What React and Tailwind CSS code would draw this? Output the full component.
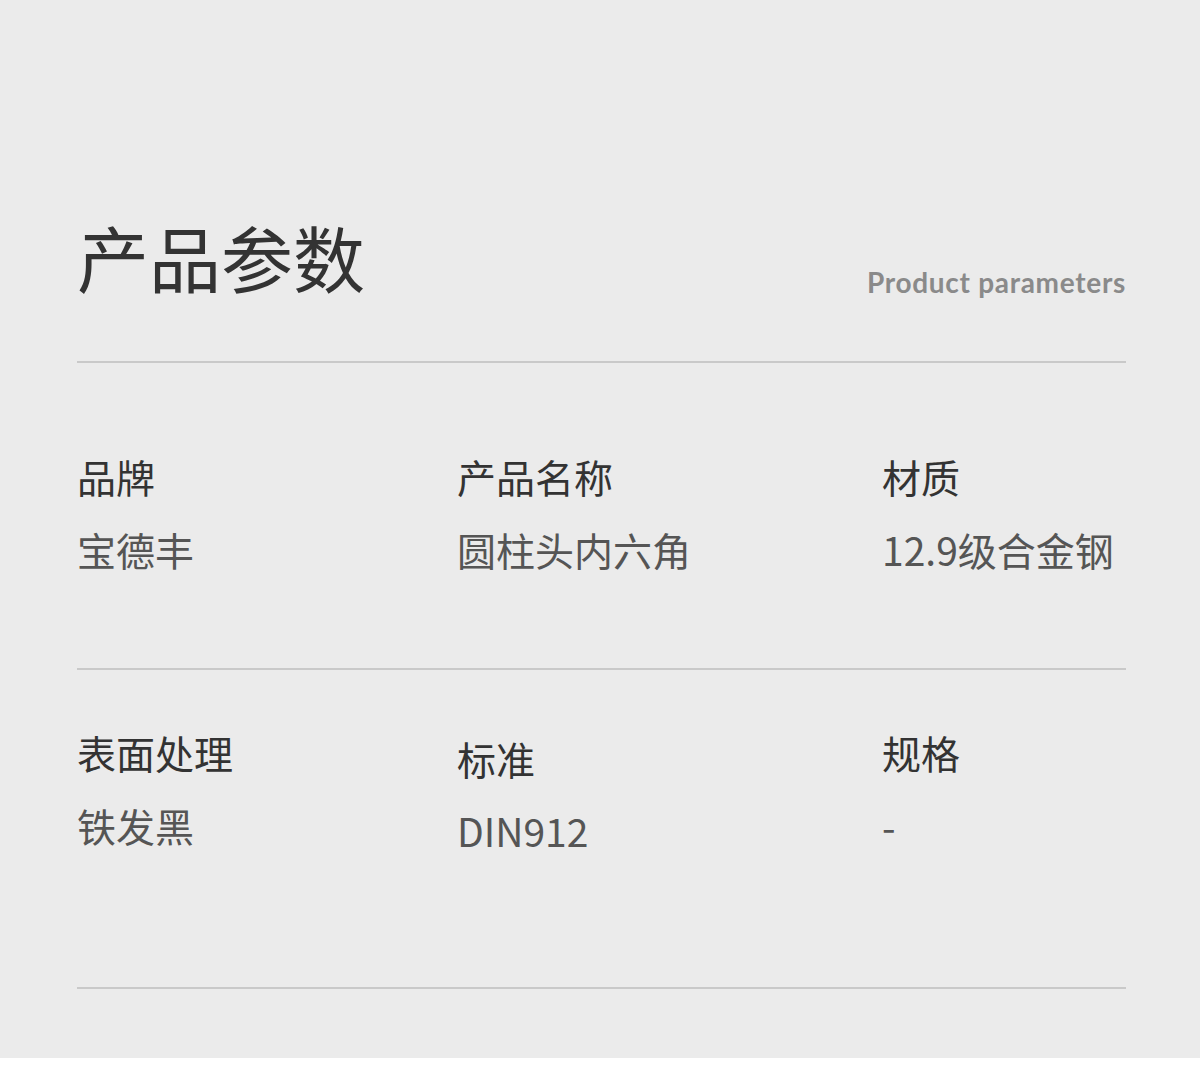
const rows = [
  [
    { label: '品牌', value: '宝德丰' },
    { label: '产品名称', value: '圆柱头内六角' },
    { label: '材质', value: '12.9级合金钢' },
  ],
  [
    { label: '表面处理', value: '铁发黑' },
    { label: '标准', value: 'DIN912', shift: true },
    { label: '规格', value: '-' },
  ],
]

const cjk = { fontFamily: '"Noto Sans CJK SC", "Noto Sans", sans-serif' }

export default function App() {
  return (
    <div className="w-[1200px] bg-white" style={cjk}>
      <div className="h-[1058px] bg-[#ebebeb] px-[77px] pt-[220px]">
        <div className="flex w-[1049px] items-end justify-between">
          <h1 className="text-[72px] leading-none font-normal text-[#333]">产品参数</h1>
          <span
            className="-mb-[4px] text-[28px] leading-none font-bold tracking-[0.7px] text-[#8a8a8a]"
            style={{ fontFamily: 'Lato, sans-serif' }}
          >
            Product parameters
          </span>
        </div>
        <div className="mt-[69px] h-[2px] w-[1049px] bg-[#c9c9c9]" />

        {rows.map((row, i) => (
          <div key={i}>
            <div className={`grid w-[1049px] grid-cols-[380px_425px_1fr] ${i === 0 ? 'pt-[94px] pb-[99px]' : 'pt-[63px] pb-[137px]'}`}>
              {row.map(c => (
                <div key={c.label} className={c.shift ? 'pt-[6px]' : ''}>
                  <p className="text-[39px] leading-none text-[#333]">{c.label}</p>
                  <p className={`text-[39px] leading-none text-[#555] ${c.shift ? 'mt-[33px]' : 'mt-[34px]'}`}>{c.value}</p>
                </div>
              ))}
            </div>
            <div className="h-[2px] w-[1049px] bg-[#c9c9c9]" />
          </div>
        ))}
      </div>
      <div className="h-[31px] bg-white" />
    </div>
  )
}
